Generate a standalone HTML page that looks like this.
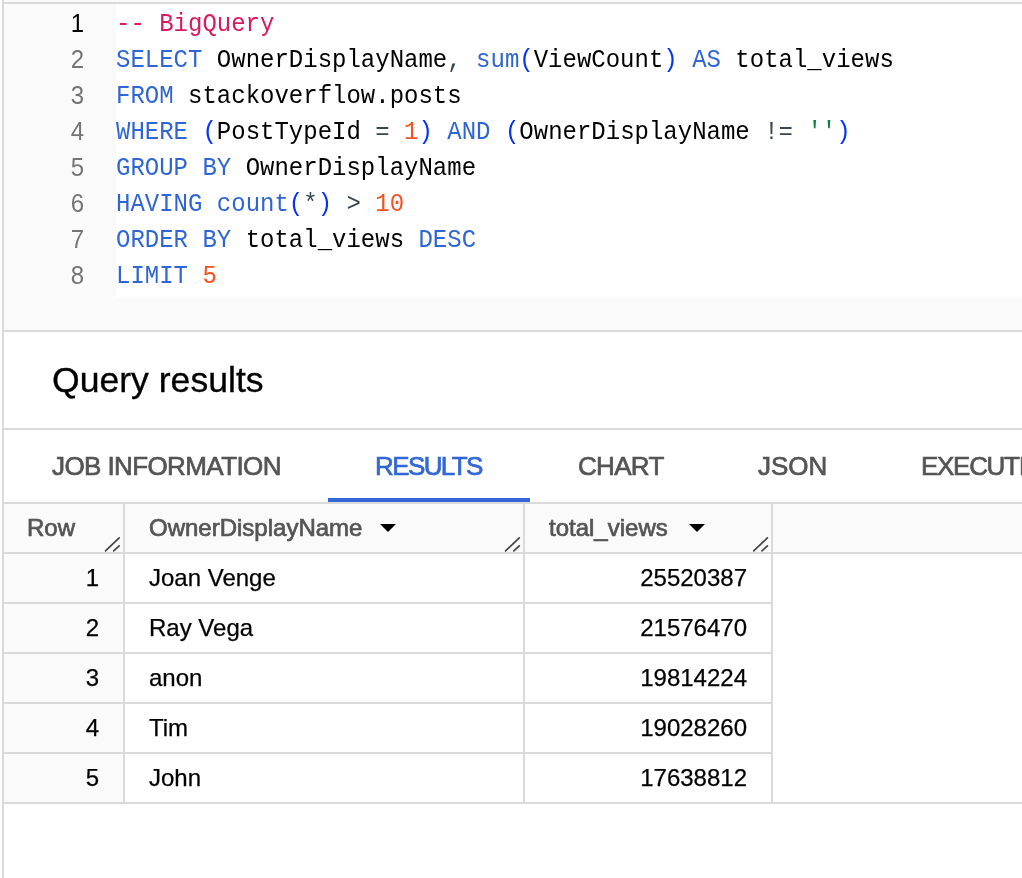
<!DOCTYPE html>
<html><head><meta charset="utf-8">
<style>
html,body{margin:0;padding:0;}
body{width:1022px;height:878px;overflow:hidden;position:relative;background:#fff;font-family:"Liberation Sans",sans-serif;}
.a{position:absolute;}
.bd{background:#dadada;}
.mono{font-family:"Liberation Mono",monospace;font-size:24px;line-height:36px;white-space:pre;}
.ln{position:absolute;font-family:"Liberation Sans",sans-serif;left:4px;width:80px;margin-top:-1px;text-align:right;color:#757575;height:36px;transform:scaleY(1.065);transform-origin:0 24.4px;}
.k{color:#3066d4}
.p{color:#0431fa}
.o{color:#37474f}
.n{color:#f4511e}
.s{color:#0b8043}
.c{color:#d81b60}
.tx{color:#000}
.cl{position:absolute;left:116px;height:36px;transform:scaleY(1.065);transform-origin:0 24.4px;}
.tab{position:absolute;top:448px;font-size:26px;line-height:36px;color:#555;white-space:nowrap;-webkit-text-stroke:0.7px currentColor;}
.th{position:absolute;top:510px;font-size:24px;line-height:36px;color:#555;white-space:nowrap;-webkit-text-stroke:0.7px currentColor;}
.td{position:absolute;font-size:24px;line-height:36px;color:#000;white-space:nowrap;-webkit-text-stroke:0.25px #000;}
</style></head><body><div style="position:absolute;left:0;top:0;width:1022px;height:878px;will-change:transform;">
<!-- top strip -->
<div class="a" style="left:4px;top:0;width:1018px;height:2px;background:#fafafa"></div>
<!-- left border -->
<div class="a bd" style="left:2px;top:0;width:2px;height:878px"></div>
<!-- top border -->
<div class="a bd" style="left:4px;top:2px;width:1018px;height:2px"></div>
<!-- gutter -->
<div class="a" style="left:4px;top:4px;width:112px;height:326px;background:#fafafa"></div>
<!-- band -->
<div class="a" style="left:116px;top:298px;width:906px;height:32px;background:#fafafa"></div>
<div class="a bd" style="left:4px;top:330px;width:1018px;height:2px"></div>

<div class="a mono" style="left:0;top:7px;width:1022px;height:294px">
<div class="ln" style="top:0;color:#000">1</div>
<div class="ln" style="top:36px">2</div>
<div class="ln" style="top:72px">3</div>
<div class="ln" style="top:108px">4</div>
<div class="ln" style="top:144px">5</div>
<div class="ln" style="top:180px">6</div>
<div class="ln" style="top:216px">7</div>
<div class="ln" style="top:252px">8</div>
<div class="cl" style="top:0px"><span class="c">-- BigQuery</span></div>
<div class="cl" style="top:36px"><span class="k">SELECT</span> <span class="tx">OwnerDisplayName</span><span class="o">,</span> <span class="k">sum</span><span class="p">(</span><span class="tx">ViewCount</span><span class="p">)</span> <span class="k">AS</span> <span class="tx">total_views</span></div>
<div class="cl" style="top:72px"><span class="k">FROM</span> <span class="tx">stackoverflow.posts</span></div>
<div class="cl" style="top:108px"><span class="k">WHERE</span> <span class="p">(</span><span class="tx">PostTypeId</span> <span class="o">=</span> <span class="n">1</span><span class="p">)</span> <span class="k">AND</span> <span class="p">(</span><span class="tx">OwnerDisplayName</span> <span class="o">!=</span> <span class="s">''</span><span class="p">)</span></div>
<div class="cl" style="top:144px"><span class="k">GROUP BY</span> <span class="tx">OwnerDisplayName</span></div>
<div class="cl" style="top:180px"><span class="k">HAVING</span> <span class="k">count</span><span class="p">(</span><span class="o">*</span><span class="p">)</span> <span class="o">&gt;</span> <span class="n">10</span></div>
<div class="cl" style="top:216px"><span class="k">ORDER BY</span> <span class="tx">total_views</span> <span class="k">DESC</span></div>
<div class="cl" style="top:252px"><span class="k">LIMIT</span> <span class="n">5</span></div>
</div>

<!-- Query results -->
<div class="a" style="left:52px;top:360px;font-size:35.6px;line-height:40px;color:#000;-webkit-text-stroke:0.35px #000;white-space:nowrap">Query results</div>
<div class="a bd" style="left:4px;top:428px;width:1018px;height:2px"></div>

<!-- tabs -->
<div class="tab" style="left:52px;letter-spacing:-0.6px">JOB INFORMATION</div>
<div class="tab" style="left:375px;color:#3367d6;letter-spacing:-1.6px">RESULTS</div>
<div class="tab" style="left:578px;letter-spacing:-0.7px">CHART</div>
<div class="tab" style="left:758px">JSON</div>
<div class="tab" style="left:921px;letter-spacing:-1.3px">EXECUTION DETAILS</div>
<div class="a" style="left:328px;top:498px;width:202px;height:4px;background:#3367d6"></div>

<!-- table header -->
<div class="a bd" style="left:4px;top:502px;width:1018px;height:2px"></div>
<div class="a" style="left:4px;top:504px;width:1018px;height:48px;background:#fafafa"></div>
<div class="a bd" style="left:4px;top:552px;width:1018px;height:2px"></div>

<!-- row bg col1 -->
<div class="a" style="left:4px;top:554px;width:119px;height:248px;background:#fafafa"></div>
<!-- row borders -->
<div class="a bd" style="left:4px;top:602px;width:769px;height:2px"></div>
<div class="a bd" style="left:4px;top:652px;width:769px;height:2px"></div>
<div class="a bd" style="left:4px;top:702px;width:769px;height:2px"></div>
<div class="a bd" style="left:4px;top:752px;width:769px;height:2px"></div>
<div class="a bd" style="left:4px;top:802px;width:1018px;height:2px"></div>
<!-- column dividers -->
<div class="a bd" style="left:123px;top:504px;width:2px;height:298px"></div>
<div class="a bd" style="left:523px;top:504px;width:2px;height:298px"></div>
<div class="a bd" style="left:771px;top:504px;width:2px;height:298px"></div>

<div class="th" style="left:27px">Row</div>
<div class="th" style="left:149px">OwnerDisplayName</div>
<div class="th" style="left:549px">total_views</div>

<svg class="a" style="left:0;top:0" width="1022" height="878">
<g fill="#000">
<path d="M380 524 L396 524 L388 532 Z"/>
<path d="M689 524 L705 524 L697 532 Z"/>
</g>
<g stroke="#404040" stroke-width="1.6" stroke-linecap="round">
<path d="M105.5 550.9 L119.2 537.9 M113.7 550.9 L119.2 545.9"/>
<path d="M505.6 550.9 L519.3 537.9 M513.8 550.9 L519.3 545.9"/>
<path d="M753.7 550.9 L767.4 537.9 M761.9 550.9 L767.4 545.9"/>
</g>
</svg>

<div class="td" style="left:4px;width:95px;text-align:right;top:560px">1</div>
<div class="td" style="left:4px;width:95px;text-align:right;top:610px">2</div>
<div class="td" style="left:4px;width:95px;text-align:right;top:660px">3</div>
<div class="td" style="left:4px;width:95px;text-align:right;top:710px">4</div>
<div class="td" style="left:4px;width:95px;text-align:right;top:760px">5</div>

<div class="td" style="left:149px;top:560px">Joan Venge</div>
<div class="td" style="left:149px;top:610px">Ray Vega</div>
<div class="td" style="left:149px;top:660px">anon</div>
<div class="td" style="left:149px;top:710px">Tim</div>
<div class="td" style="left:149px;top:760px">John</div>

<div class="td" style="left:525px;width:222px;text-align:right;top:560px">25520387</div>
<div class="td" style="left:525px;width:222px;text-align:right;top:610px">21576470</div>
<div class="td" style="left:525px;width:222px;text-align:right;top:660px">19814224</div>
<div class="td" style="left:525px;width:222px;text-align:right;top:710px">19028260</div>
<div class="td" style="left:525px;width:222px;text-align:right;top:760px">17638812</div>
</div></body></html>
